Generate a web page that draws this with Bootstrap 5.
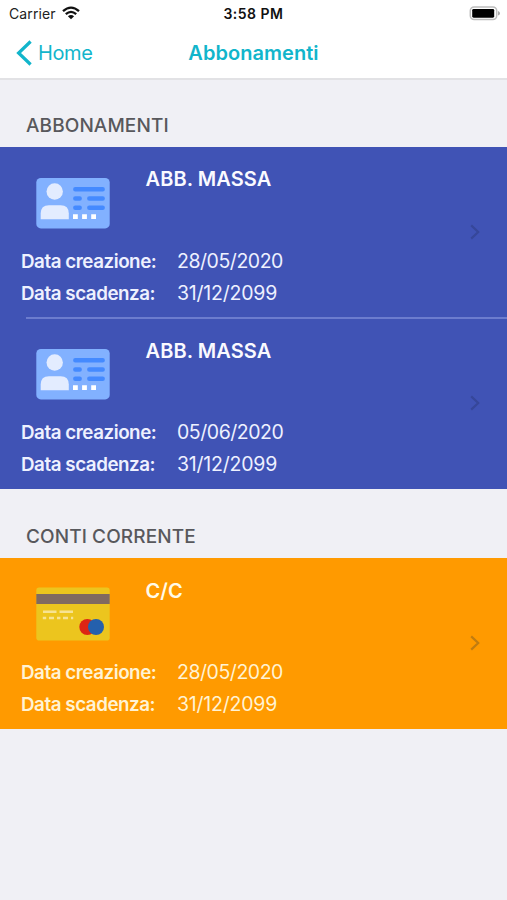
<!DOCTYPE html>
<html lang="it">
<head>
<meta charset="utf-8">
<meta name="viewport" content="width=device-width, initial-scale=1">
<title>Abbonamenti</title>
<link href="https://cdn.jsdelivr.net/npm/bootstrap@5.3.0/dist/css/bootstrap.min.css" rel="stylesheet">
<style>
body{font-family:Inter,"Liberation Sans",sans-serif;background:#f0f0f5;min-height:100vh}
.top-area{height:80px;border-bottom:2px solid #e2e2e5}
.status-bar{height:28px;font-size:14px;color:#222;line-height:28px}
.status-bar>*,.title-bar>*{flex:0 0 33.3333%}
.carrier{padding-left:9px;letter-spacing:.1px}
.carrier svg{margin-left:6px;margin-top:-2px}
.clock{font-weight:600;letter-spacing:.5px;color:#111}
.battery{padding-right:6px}
.title-bar{height:50px;font-size:20px;line-height:50px;color:#12b5cb}
.back{color:inherit;padding-left:16px}
.back:hover{color:inherit}
.back span{margin-left:5px;letter-spacing:-.4px}
.page-title{font-size:20px;font-weight:600;letter-spacing:.05px}
.section-title{font-size:19px;font-weight:500;line-height:24px;color:#58585c;padding:34px 0 0 26px;height:67px;margin:0;letter-spacing:.1px}
.section-title.later{height:69px;padding-top:36px}
.pass{height:171px;padding:20px 27px 0 21px;font-size:18.8px}
.pass-blue{background:#4053b5;color:#eef1ff}
.pass-orange{background:#ff9a00;color:#fff3d4}
.divided{height:172px;background:linear-gradient(#6c7cce,#6c7cce) 26px 100%/100% 2px no-repeat #4053b5}
.divided + .pass{height:170px;padding-top:19px}
.pass-head{height:77px}
.pass-icon{width:74px;height:54px;margin:9px 36px 0 15px}
.pass-name{font-size:20px;font-weight:600;line-height:24px;margin:1px 0 0 -.5px;letter-spacing:.08px;color:#fafaff}
.divided .pass-name{margin-top:0}
.pass-orange .pass-name{color:#fffbe9}
.pass-list{padding-top:1.5px}
.pass-line{line-height:32px}
.pass-line dt{width:156px;font-weight:600;letter-spacing:-.46px}
.pass-line dd{margin:-1px 0 1px;font-size:19.5px;letter-spacing:-.46px}
.pass-line:last-child dd{letter-spacing:-.22px}
.chevron{margin-top:57px}
</style>
</head>
<body>
<header class="top-area bg-white">
  <div class="status-bar d-flex align-items-center">
    <div class="carrier d-flex align-items-center">Carrier
      <svg width="18" height="14" viewBox="0 0 18 14" fill="none" stroke="#111" stroke-width="2.3"><path d="M1 5.2Q9-2 17 5.2M3.8 8.2Q9 3.6 14.2 8.2"/><path d="M9 13.3 5.9 10.3Q9 7.9 12.1 10.3Z" fill="#111" stroke="none"/></svg>
    </div>
    <div class="clock text-center">3:58 PM</div>
    <div class="battery d-flex justify-content-end">
      <svg width="32" height="16" viewBox="0 0 32 16"><rect x="1.3" y="1" width="26.4" height="12.6" rx="3.8" fill="#fff" stroke="#bdbdbd" stroke-width="1.5"/><rect x="3.2" y="2.9" width="22" height="8.8" rx="1.4" fill="#000"/><path d="M29 5Q31 5.7 31 7.3T29 9.6Z" fill="#aaa"/></svg>
    </div>
  </div>
  <nav class="title-bar d-flex align-items-center">
    <a class="back d-flex align-items-center text-decoration-none" href="#">
      <svg width="17" height="26" viewBox="0 0 17 26" fill="none" stroke="currentColor" stroke-width="3.2"><path d="M14.6 1.5 2.6 13 14.6 24.5"/></svg><span>Home</span>
    </a>
    <div class="page-title text-center">Abbonamenti</div>
  </nav>
</header>

<svg class="d-none">
  <symbol id="id-card" viewBox="0 0 74 54">
    <rect x=".3" y="2" width="73.4" height="50.4" rx="4.5" fill="#82b1ff"/>
    <circle cx="18.7" cy="15.5" r="8.2" fill="#e3ecff"/>
    <path d="M4.7 43.2V37.5Q4.7 29.2 13 29.2H24.6Q32.8 29.2 32.8 37.5V43.2Z" fill="#e3ecff"/>
    <path d="M39.3 13.2H66.7M39.3 22.5H43.7M53.3 22.5H66.7M39.3 31.7H43.7M53.3 31.7H66.7" stroke="#448aff" stroke-width="4.4" stroke-linecap="round"/>
    <path d="M37 38.2h4.8V43H37zM46.1 38.2h4.8V43h-4.8zM55.2 38.2H60V43h-4.8z" fill="#fff"/>
  </symbol>
  <symbol id="bank-card" viewBox="0 0 74 54">
    <rect x=".3" y=".6" width="73.4" height="53" rx="2.8" fill="#ecc51e"/>
    <rect x=".3" y="7" width="73.4" height="10" fill="#806a60"/>
    <path d="M7 24.7h13.5M23.5 24.7H37" stroke="#f7e392" stroke-width="2.6"/>
    <path d="M6.8 31h3.4M13 31h5M21 31h3.4M27 31h5M35 31h2.2" stroke="#f7e392" stroke-width="2.6"/>
    <circle cx="51.3" cy="40" r="8" fill="#dd2514"/><circle cx="60" cy="40" r="8" fill="#2460ad"/>
  </symbol>
  <symbol id="arrow" viewBox="0 0 10 16"><path d="M1.2 1.4 8.2 8 1.2 14.6" fill="none" stroke="currentColor" stroke-width="2.2"/></symbol>
</svg>

<main>
  <h2 class="section-title">ABBONAMENTI</h2>
  <section class="pass pass-blue divided d-flex justify-content-between">
    <div>
      <div class="pass-head d-flex"><svg class="pass-icon"><use href="#id-card"/></svg><h3 class="pass-name">ABB. MASSA</h3></div>
      <dl class="pass-list mb-0"><div class="pass-line d-flex"><dt>Data creazione:</dt><dd>28/05/2020</dd></div><div class="pass-line d-flex"><dt>Data scadenza:</dt><dd>31/12/2099</dd></div></dl>
    </div>
    <svg class="chevron" width="10" height="16" style="color:#36479a"><use href="#arrow"/></svg>
  </section>
  <section class="pass pass-blue d-flex justify-content-between">
    <div>
      <div class="pass-head d-flex"><svg class="pass-icon"><use href="#id-card"/></svg><h3 class="pass-name">ABB. MASSA</h3></div>
      <dl class="pass-list mb-0"><div class="pass-line d-flex"><dt>Data creazione:</dt><dd>05/06/2020</dd></div><div class="pass-line d-flex"><dt>Data scadenza:</dt><dd>31/12/2099</dd></div></dl>
    </div>
    <svg class="chevron" width="10" height="16" style="color:#36479a"><use href="#arrow"/></svg>
  </section>
  <h2 class="section-title later">CONTI CORRENTE</h2>
  <section class="pass pass-orange d-flex justify-content-between">
    <div>
      <div class="pass-head d-flex"><svg class="pass-icon"><use href="#bank-card"/></svg><h3 class="pass-name">C/C</h3></div>
      <dl class="pass-list mb-0"><div class="pass-line d-flex"><dt>Data creazione:</dt><dd>28/05/2020</dd></div><div class="pass-line d-flex"><dt>Data scadenza:</dt><dd>31/12/2099</dd></div></dl>
    </div>
    <svg class="chevron" width="10" height="16" style="color:#c17c10"><use href="#arrow"/></svg>
  </section>
</main>
<script src="https://cdn.jsdelivr.net/npm/bootstrap@5.3.0/dist/js/bootstrap.bundle.min.js"></script>
</body>
</html>
